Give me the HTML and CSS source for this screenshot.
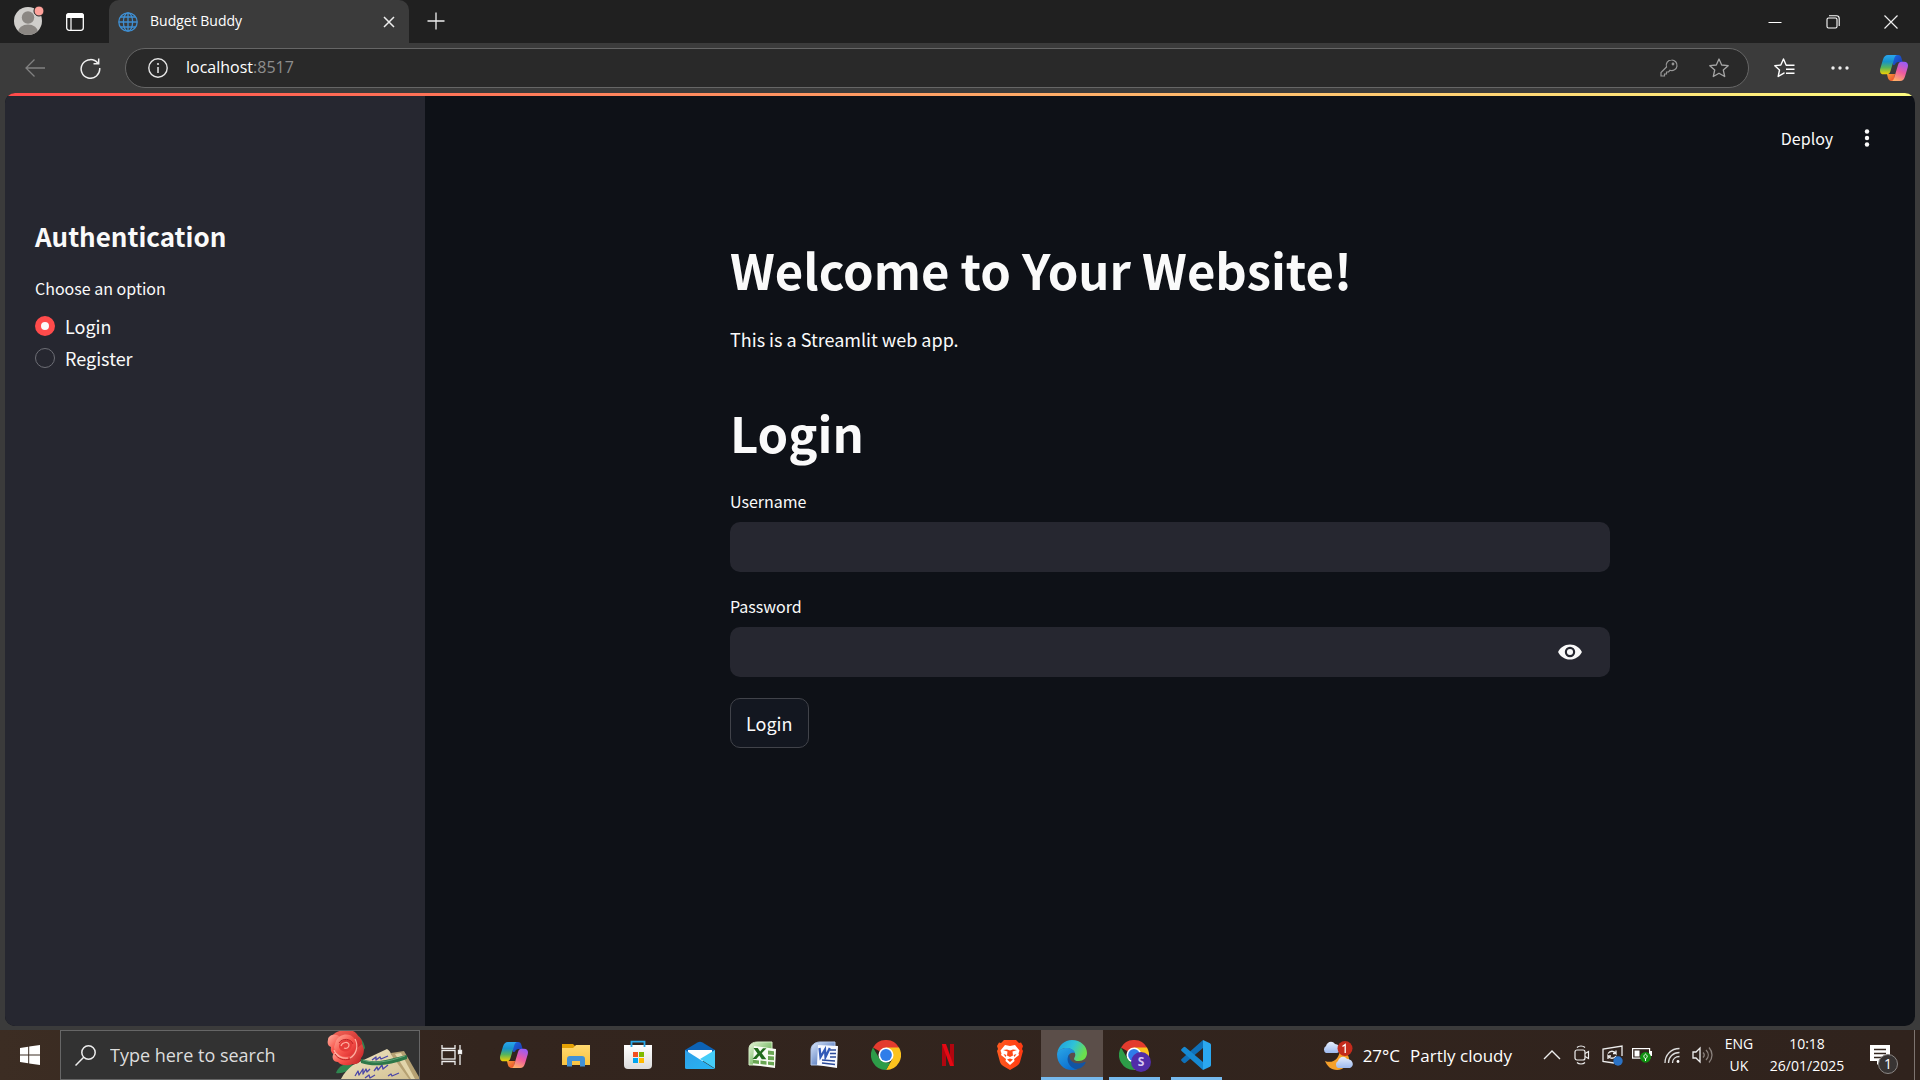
FILE: index.html
```html
<!DOCTYPE html>
<html lang="en">
<head>
<meta charset="utf-8">
<meta name="viewport" content="width=device-width, initial-scale=1">
<title>Budget Buddy</title>
<link rel="stylesheet" href="styles.css">
</head>
<body>
<svg class="defs" width="0" height="0" aria-hidden="true">
  <defs>
    <linearGradient id="cpA" x1="0" y1="0" x2="0" y2="1"><stop offset="0" stop-color="#2aa5ee"/><stop offset=".35" stop-color="#1793c9"/><stop offset=".65" stop-color="#57b55c"/><stop offset="1" stop-color="#f5d000"/></linearGradient>
    <linearGradient id="cpB" x1=".7" y1="0" x2=".3" y2="1"><stop offset="0" stop-color="#9a5cf5"/><stop offset=".5" stop-color="#ee5aa0"/><stop offset="1" stop-color="#ffb067"/></linearGradient>
    <linearGradient id="cpC" x1="0" y1="0" x2="1" y2="1"><stop offset="0" stop-color="#1b68e0"/><stop offset="1" stop-color="#1d37b0"/></linearGradient>
    <linearGradient id="cpD" x1="0" y1="0" x2="1" y2="1"><stop offset="0" stop-color="#f9a03a"/><stop offset="1" stop-color="#e8452c"/></linearGradient>
    <linearGradient id="edA" x1="0" y1="0" x2="1" y2=".4"><stop offset="0" stop-color="#1d9be0"/><stop offset=".55" stop-color="#2fc2d8"/><stop offset="1" stop-color="#6be04d"/></linearGradient>
    <linearGradient id="edB" x1="0" y1="0" x2=".6" y2="1"><stop offset="0" stop-color="#2aa6e6"/><stop offset="1" stop-color="#0b6fd0"/></linearGradient>
    <linearGradient id="fold" x1="0" y1="0" x2="0" y2="1"><stop offset="0" stop-color="#ffd970"/><stop offset="1" stop-color="#f8c341"/></linearGradient>
    <linearGradient id="mailL" x1="0" y1="0" x2="1" y2="1"><stop offset="0" stop-color="#2f9fe8"/><stop offset="1" stop-color="#27b5f3"/></linearGradient>
    <linearGradient id="storeBag" x1="0" y1="0" x2="0" y2="1"><stop offset="0" stop-color="#fff"/><stop offset="1" stop-color="#dcdcdc"/></linearGradient>
    <linearGradient id="xlBack" x1="0" y1="0" x2="1" y2="1"><stop offset="0" stop-color="#e6f6d8"/><stop offset="1" stop-color="#3f9a2c"/></linearGradient>
    <linearGradient id="wdBack" x1="0" y1="0" x2="1" y2="1"><stop offset="0" stop-color="#dbe7fa"/><stop offset="1" stop-color="#2250a8"/></linearGradient>
    <linearGradient id="cloud" x1="0" y1="0" x2="0" y2="1"><stop offset="0" stop-color="#e6eefc"/><stop offset="1" stop-color="#9db9ee"/></linearGradient>
    <linearGradient id="paper" x1="0" y1="0" x2="1" y2="1"><stop offset="0" stop-color="#efe5c2"/><stop offset="1" stop-color="#d3c294"/></linearGradient>
    <linearGradient id="petal" x1="0" y1="0" x2="1" y2="1"><stop offset="0" stop-color="#ffb3a2"/><stop offset=".5" stop-color="#f9594f"/><stop offset="1" stop-color="#d8262a"/></linearGradient>
    <linearGradient id="petalDark" x1="0" y1="0" x2="1" y2="1"><stop offset="0" stop-color="#f4685a"/><stop offset="1" stop-color="#c01a1f"/></linearGradient>
    <linearGradient id="brave" x1="0" y1="0" x2="1" y2="0"><stop offset="0" stop-color="#ff5a1f"/><stop offset="1" stop-color="#ff3a12"/></linearGradient>
    <symbol id="copilot" viewBox="0 0 28 26">
      <path d="M12.500 0h5.500c2 0 3 1.200 3.600 3.400L22.600 7h-4c-2 0-3 .8-3.600 2.800L13 10z" fill="url(#cpC)"/>
      <path d="M7 19h8l-1 7h-2.500C9.500 26 8.400 24.500 7.800 22.500z" fill="url(#cpD)"/>
      <path d="M8 0h9.500c-1.800 0-2.600 1.300-3.200 3.300L10.500 16c-.7 2.300-1.700 3.300-3.800 3.300H4c-3.500 0-4.600-2.300-3.700-5.800L3 4.500C4 1.500 5.300 0 8 0z" fill="url(#cpA)"/>
      <path d="M20 26h-9c1.800 0 2.600-1.300 3.200-3.300L18 10c.7-2.300 1.700-3.300 3.800-3.300H24c3.500 0 4.600 2.300 3.700 5.800L25 21.500C24 24.500 22.700 26 20 26z" fill="url(#cpB)"/>
    </symbol>
    <symbol id="chrome" viewBox="0 0 30 30">
      <path d="M15 15 2 7.500A15 15 0 0 1 28 7.500z" fill="#e33b2e"/>
      <path d="M15 15V7.500h13A15 15 0 0 1 15 30l6.500-11.300z" fill="#fcc31e"/>
      <path d="M2 7.500 8.500 18.800 15 22.500h4.300L15 30A15 15 0 0 1 2 7.500z" fill="#2d9c48"/>
      <circle cx="15" cy="15" r="7.500" fill="#fff"/><circle cx="15" cy="15" r="5.900" fill="#2f7de9"/>
    </symbol>
  </defs>
</svg>

<header class="tabstrip">
  <button class="avatar" aria-label="Profile">
    <svg width="32" height="32" viewBox="0 0 32 32"><defs><clipPath id="av"><circle cx="14" cy="17" r="14"/></clipPath></defs><circle cx="14" cy="17" r="14" fill="#d0cecb"/><g clip-path="url(#av)" fill="#8b8783"><circle cx="14" cy="13.500" r="6.200"/><ellipse cx="14" cy="28" rx="10" ry="7.500"/></g><circle cx="25" cy="7" r="5" fill="#ffa29b" stroke="#202020"/></svg>
  </button>
  <button class="workspaces" aria-label="Tab actions menu">
    <svg width="18" height="18" viewBox="0 0 18 18"><rect x=".7" y=".7" width="16.600" height="16.600" rx="2.500" fill="none" stroke="#fff" stroke-width="1.300"/><path d="M0 5V3a3 3 0 0 1 3-3h12a3 3 0 0 1 3 3v2z" fill="#fff"/><path d="M5 5v12" stroke="#fff" stroke-width="1.200"/></svg>
  </button>
  <div class="tab">
    <svg width="20" height="20" viewBox="0 0 20 20" fill="none" stroke="#3f8fd2" stroke-width="1.300"><circle cx="10" cy="10" r="9.200"/><ellipse cx="10" cy="10" rx="4.600" ry="9.200"/><path d="M10 1v18M1 10h18M2.500 5h15M2.500 15h15"/></svg>
    <span class="tab-title">Budget Buddy</span>
    <button class="tab-close" aria-label="Close tab"><svg width="12" height="12" viewBox="0 0 12 12"><path d="m1 1 10 10M11 1 1 11" stroke="#eee" stroke-width="1.500"/></svg></button>
  </div>
  <button class="new-tab" aria-label="New tab"><svg width="18" height="18" viewBox="0 0 18 18"><path d="M9 .5v17M.5 9h17" stroke="#eee" stroke-width="1.300"/></svg></button>
  <div class="window-controls">
    <button aria-label="Minimise"><svg width="14" height="14" viewBox="0 0 14 14"><path d="M.5 7.500h13" stroke="#fff"/></svg></button>
    <button aria-label="Restore"><svg width="14" height="14" viewBox="0 0 14 14" fill="none" stroke="#fff" stroke-width="1.100"><rect x="1" y="3" width="10" height="10" rx="1.500"/><path d="M3 .8h7.500a2.700 2.700 0 0 1 2.700 2.700V11"/></svg></button>
    <button aria-label="Close"><svg width="14" height="14" viewBox="0 0 14 14"><path d="m.5.500 13 13m0-13-13 13" stroke="#eee" stroke-width="1.200"/></svg></button>
  </div>
</header>

<nav class="toolbar">
  <button class="tool back" aria-label="Back"><svg width="20" height="18" viewBox="0 0 20 18" fill="none" stroke="#818181" stroke-width="1.300"><path d="M20 9H1M9.500.500 1 9l8.500 8.500"/></svg></button>
  <button class="tool reload" aria-label="Refresh"><svg width="21" height="21" viewBox="0 0 21 21" fill="none" stroke="#f0f0f0" stroke-width="1.500"><path d="M18 5.500a9.300 9.300 0 1 0 1.700 4.500M18.700.5v5.300h-5.200"/></svg></button>
  <div class="address">
    <button class="tool info" aria-label="Site information"><svg width="20" height="20" viewBox="0 0 20 20"><circle cx="10" cy="10" r="9.200" fill="none" stroke="#e6e6e6" stroke-width="1.400"/><path d="M10 9v6" stroke="#ddd" stroke-width="1.600"/><circle cx="10" cy="6" r="1.100" fill="#ddd"/></svg></button>
    <a class="url" href="#">localhost<span>:8517</span></a>
    <button class="tool key" aria-label="Passwords"><svg width="18" height="18" viewBox="0 0 18 18" fill="none" stroke="#989898" stroke-width="1.200"><path d="M11.500 1a5.300 5.300 0 0 0-5 7L1 13.500V17h3.500v-2h2v-2h2l1.500-1.700A5.300 5.300 0 1 0 11.500 1z"/><circle cx="13" cy="5" r=".8" fill="#989898"/></svg></button>
    <button class="tool star" aria-label="Add to favourites"><svg width="20" height="20" viewBox="0 0 20 20"><path d="m10 1 2.700 6 6.500.7-4.900 4.300 1.400 6.500L10 15.200l-5.700 3.300L5.700 12 .8 7.700l6.500-.7z" fill="none" stroke="#a5a5a5" stroke-width="1.300" stroke-linejoin="round"/></svg></button>
  </div>
  <div class="tools-right">
    <button class="tool" aria-label="Favourites"><svg width="21" height="20" viewBox="0 0 21 20" fill="none" stroke="#fff" stroke-width="1.400" stroke-linejoin="round"><path d="M13 7.200h-.8L9.500 1 6.800 7 .8 7.700l4.700 4.300-1.300 6.500 5.300-3.200 1-.6M13 7.200h7.500M12 11.200h8.500M12 15.200h8.500"/></svg></button>
    <button class="tool" aria-label="Settings and more"><svg width="18" height="4" viewBox="0 0 18 4" fill="#eee"><circle cx="2" cy="2" r="1.700"/><circle cx="9" cy="2" r="1.700"/><circle cx="16" cy="2" r="1.700"/></svg></button>
    <button class="tool" aria-label="Copilot"><svg width="28" height="26"><use href="#copilot"/></svg></button>
  </div>
</nav>

<div class="page">
  <div class="decoration"></div>
  <aside class="sidebar">
    <h2>Authentication</h2>
    <fieldset>
      <legend>Choose an option</legend>
      <label><input type="radio" name="option" checked>Login</label>
      <label><input type="radio" name="option">Register</label>
    </fieldset>
  </aside>
  <main class="main">
    <div class="app-header">
      <button class="deploy">Deploy</button>
      <button class="menu" aria-label="Main menu"><svg width="6" height="18" viewBox="0 0 6 18" fill="#fafafa"><circle cx="3" cy="2.500" r="2.200"/><circle cx="3" cy="9" r="2.200"/><circle cx="3" cy="15.500" r="2.200"/></svg></button>
    </div>
    <div class="block">
      <h1>Welcome to Your Website!</h1>
      <p>This is a Streamlit web app.</p>
      <h1>Login</h1>
      <form>
        <label for="username">Username</label>
        <div class="field"><input id="username" type="text"></div>
        <label for="password">Password</label>
        <div class="field"><input id="password" type="password"><button type="button" aria-label="Show password"><svg width="26" height="26" viewBox="0 0 24 24" fill="#fafafa"><path d="M12 5C7 5 2.730 8.110 1 12c1.730 3.890 6 7 11 7s9.270-3.110 11-7c-1.730-3.890-6-7-11-7zm0 11.800a4.800 4.800 0 1 1 0-9.600 4.800 4.800 0 0 1 0 9.600zm0-7.600a2.800 2.800 0 1 0 0 5.600 2.800 2.800 0 0 0 0-5.600z"/></svg></button></div>
        <button class="submit" type="button">Login</button>
      </form>
    </div>
  </main>
</div>

<footer class="taskbar">
  <button class="start" aria-label="Start"><svg width="20" height="20" viewBox="0 0 20 20" fill="#fff"><path d="M0 3l8.200-1.200v7.700H0zM9.200 1.600 20 0v9.500H9.200zM0 10.500h8.200v7.700L0 17zM9.200 10.500H20V20L9.200 18.400z"/></svg></button>
  <div class="search">
    <svg width="21" height="21" viewBox="0 0 21 21" fill="none" stroke="#eee" stroke-width="1.500"><circle cx="13.500" cy="7.500" r="6.700"/><path d="m8.700 12.300-8.200 8.200"/></svg>
    <input type="text" placeholder="Type here to search" aria-label="Type here to search">
    <svg class="rose" width="92" height="48" viewBox="0 0 92 48">
      <path d="M27 2c5 2 10 8 11 15l-5 8-8-6z" fill="#2f8650"/>
      <path d="M29 6c2 5 4 9 5 15" fill="none" stroke="#5fae78"/>
      <path d="M24 33c-7-1-13 3-15 9 6 1 13-2 18-7z" fill="#2f8650"/>
      <path d="m64 22 13-2 15 26v2H70z" fill="#b5a173"/>
      <path d="m68 23 6-1 14 26h-4z" fill="#e2d5ab"/>
      <path d="M14 48c3-6 7-10 12-14l34-16c4 2 4 7 8 11l14 19z" fill="url(#paper)"/>
      <path d="M28 45l3-5 1 4 4-6 0 5 3-5 1 3 3-3M45 29l4-3 0 3 4-3 1 2 7-3M47 40l3-4 1 3 4-5 1 4 5-4M38 47l4-3 1 3 5-3M61 45l3-2 1 2 7-3" fill="none" stroke="#4a46a8" stroke-width="1.300" stroke-linejoin="round"/>
      <path d="M34 28c12 4 22 2 33-1l13-3v4c-15 5-31 9-46 4z" fill="#2d7748"/>
      <path d="M36 29c12 4 24 2 42-4" fill="none" stroke="#65a67a"/>
      <path d="M17 0c6-2 12 0 14 5 5 3 5 9 3 13l-12 6L8 18 5 5C8 1 13-1 17 0z" fill="url(#petalDark)"/>
      <path d="M1 9c0-4 4-6 9-5l9 5-7 15c-6 1-9-3-8-8-3-1-4-4-3-7z" fill="url(#petal)"/>
      <path d="M7 22c-3 4-1 9 4 9 3 4 10 4 15 2l2-9-9-4z" fill="url(#petal)"/>
      <path d="M35 13c3 5 2 11-1 14 0 4-4 7-9 6-3-2-4-7-1-11z" fill="url(#petalDark)"/>
      <path d="M9 10c3-7 13-9 18-3 5 5 2 15-4 18-8 3-16-3-16-9z" fill="url(#petal)"/>
      <path d="M13 12c3-5 12-4 12 1 0 6-5 9-9 7-4-1-5-5-3-8z" fill="#e63c39"/>
      <path d="M14 15c1-4 8-5 8-1 0 3-3 4-5 3M28 8c4 7 1 16-5 19M7 19c2 6 8 9 14 8" fill="none" stroke="#ffaea0" stroke-width="1.200"/>
      <path d="M12 12c3-5 12-5 14 1M8 23c3 5 9 7 15 5" fill="none" stroke="#bd2325"/>
    </svg>
  </div>
  <button class="app task-view" aria-label="Task View"><svg width="22" height="20" viewBox="0 0 22 20" fill="none" stroke="#eee" stroke-width="1.300"><path d="M1 0v3.500h13V0M1 20v-3.500h13V20M19 0v5M19 10v10"/><rect x="1" y="5.500" width="13" height="8.500"/><path d="M17.500 5.500h3v3h-3z" fill="#fff"/></svg></button>
  <button class="app" aria-label="Copilot"><svg width="28" height="26"><use href="#copilot"/></svg></button>
  <button class="app" aria-label="File Explorer"><svg width="28" height="24" viewBox="0 0 28 24"><path d="M0 1h11l3 3v3H0z" fill="#e4a104"/><path d="M0 5h11l3-3h14v20H0z" fill="url(#fold)"/><path d="M5 23.500V16a3 3 0 0 1 3-3h12a3 3 0 0 1 3 3v7.500h-5V18h-8v5.500z" fill="#4191d6"/></svg></button>
  <button class="app" aria-label="Microsoft Store"><svg width="30" height="30" viewBox="0 0 30 30"><path d="M8.500 7V1.700h13V7" fill="none" stroke="#28a8ea" stroke-width="1.800"/><path d="M1 5h28v20a4 4 0 0 1-4 4H5a4 4 0 0 1-4-4z" fill="url(#storeBag)"/><path d="M8.500 5v2M21.500 5v2" stroke="#28a8ea" stroke-width="1.800"/><path d="M10 12h5v5h-5z" fill="#f25022"/><path d="M16 12h5v5h-5z" fill="#7fba00"/><path d="M10 18h5v5h-5z" fill="#00a4ef"/><path d="M16 18h5v5h-5z" fill="#ffb900"/></svg></button>
  <button class="app" aria-label="Mail"><svg width="30" height="30" viewBox="0 0 30 30"><path d="M0 10 12.500 2.500q2.500-1.500 5 0L30 10v6H0z" fill="#0c62b5"/><path d="M3 10h24v6L15 23 3 16z" fill="#fff"/><path d="M0 10v17.500a1.500 1.500 0 0 0 1.500 1.500H30z" fill="url(#mailL)"/><path d="M30 10v18.500L15 19z" fill="#45cdf8"/></svg></button>
  <button class="app" aria-label="Excel"><svg width="29" height="28" viewBox="0 0 29 28"><path d="M1 24V8C1 3 5 1 10 1h14v23z" fill="url(#xlBack)" stroke="#d4ecc5"/><path d="m6 5 22 3-1 19-22-3z" fill="#f7fbf3"/><path d="M20 9.500l6 .7v3.700l-6-.5zM20 15l6 .5v3.800l-6-.4zM20 20.500l6 .5v3.500l-6-.7zM12.500 19.500l6 .7v3.500l-6-.7zM5 18.700l6 .7v3.500l-6-.7z" fill="#68a552"/><path d="M5.500 7h4.200l2.400 3.500L15 7.200h3.500l-4.700 5 4.500 6h-4.500l-2.500-3.700-3 3.500H4.500l5-5.500z" fill="#216b1d"/></svg></button>
  <button class="app" aria-label="Word"><svg width="29" height="28" viewBox="0 0 29 28"><path d="M1 24V9C1 4 5 1 10 1h15v23z" fill="url(#wdBack)" stroke="#aec3e8"/><path d="m8 4 20 1-1 22-20-3z" fill="#f7f9ff"/><path d="M20 9h6M20 12.500h6M20 16h6M12 19l13 1M12 22l13 1.500" stroke="#2c4b9a" stroke-width="1.600"/><path d="m9.500 7 1 9L15 8.500l.500 7.500 4.300-9" fill="none" stroke="#3159b7" stroke-width="2.300"/></svg></button>
  <button class="app" aria-label="Chrome"><svg width="30" height="30"><use href="#chrome"/></svg></button>
  <button class="app" aria-label="Netflix"><svg width="12" height="22" viewBox="0 0 12 22"><path d="M0 0h4v22l-4 .5zM8 0h4v22.500L8 22z" fill="#b1060f"/><path d="M0 0h4l8 22.500L8 22z" fill="#e50914"/></svg></button>
  <button class="app" aria-label="Brave"><svg width="26" height="30" viewBox="0 0 26 30"><path d="M7 0h12l3 3 2-.5 2 3.500-1 3 1 2-3 11c-.5 2-2 3-4 4.500L13 30l-6-3.500C5 25 3.500 24 3 22L0 11l1-2-1-3 2-3.500L4 3z" fill="url(#brave)"/><path d="m8 5 5 1 5-1 4.500 5.500-1 3 .5 1.500-5 4 .5 2L13 25l-4.500-4 .5-2-5-4 .5-1.500-1-3z" fill="#fff"/><path d="m6 10 4.500 1.500-.5 4L13 17l3-1.500-.5-4L20 10l-4-.500-3 1-3-1zM6.500 14l3 1-1 2zM19.500 14l-3 1 1 2zM10 19.500l3-1 3 1-3 2.500z" fill="#ff4a18"/></svg></button>
  <button class="app active" aria-label="Edge"><svg width="30" height="30" viewBox="0 0 30 30"><path d="M.2 13.500C1.200 5.500 7.500 0 15 0c8.500 0 15 6 15 13 0 5-3.800 8-8.200 8-3.500 0-5.100-1.300-4.700-2.600.5-1.200 1.200-1.800 1.200-3.600C18.300 11 14 8 9.500 8 5 8 1.500 10.500.2 13.500z" fill="url(#edA)"/><path d="M.1 13.500C1.500 10.300 5 8 9.500 8c4.400 0 7.700 2 8.600 5-5-1.400-7.400 2-7.100 6 .4 5.500 4.500 9.500 9.500 10-1.500.7-3.500 1-5.500 1C6 30-.5 22.500.1 13.500z" fill="url(#edB)"/><path d="M12.600 14.200C9 17.500 10 25 17 28.500c2 .8 3.500.6 5 .1 3-1.200 5.300-3.400 6.500-5.700.3-.7-.3-1.100-.9-.8C22 25 11 23.500 12.600 14.200z" fill="#1254a3"/></svg></button>
  <button class="app running" aria-label="Chrome, profile S"><svg width="30" height="30"><use href="#chrome"/></svg><span class="profile">S</span></button>
  <button class="app running" aria-label="Visual Studio Code"><svg width="30" height="30" viewBox="0 0 30 30"><path d="M22 8 4.500 22.700a1.500 1.500 0 0 1-2 0L.6 21a1.400 1.400 0 0 1 0-2L22 0z" fill="#0f70b8"/><path d="M22 22 4.500 7.300a1.500 1.500 0 0 0-2 0L.6 9a1.400 1.400 0 0 0 0 2L22 30z" fill="#1689d2"/><path d="m22 0 7 3.300c.6.300 1 .9 1 1.600v20.200c0 .7-.4 1.300-1 1.600L22 30z" fill="#2ba8f0"/></svg></button>

  <div class="tray">
    <button class="weather"><svg width="31" height="29" viewBox="0 0 31 29"><path d="M18 9c4 1 9 4 9 9s-5 11-12 11c-6 0-10-4-12-9 8 3 14-2 15-11z" fill="#f5a02b"/><path d="M4 12a4 4 0 0 1 0-7C5 1 10-1 13 3c5 0 7 8 2 9z" fill="url(#cloud)"/><path d="M16 27a4 4 0 0 1 0-7c1-4 6-6 9-2 6 0 8 7 3 9z" fill="url(#cloud)"/><circle cx="23" cy="7.500" r="7.500" fill="#c42b1c"/><path d="m20.500 5.500 2.700-2V12" fill="none" stroke="#fff" stroke-width="1.300"/></svg><span>27°C</span><span>Partly cloudy</span></button>
    <button class="tray-icon" aria-label="Show hidden icons"><svg width="18" height="10" viewBox="0 0 18 10"><path d="m1 9 8-8 8 8" fill="none" stroke="#eee" stroke-width="1.400"/></svg></button>
    <button class="tray-icon" aria-label="Meet Now"><svg width="16" height="20" viewBox="0 0 16 20" fill="none" stroke="#eee" stroke-width="1.200"><rect x="1" y="5" width="10" height="10" rx="2"/><path d="m11 8.500 3.500-2v7L11 11.500M3 2.500c2-2 6-2 8 0M3 17.500c2 2 6 2 8 0"/></svg></button>
    <button class="tray-icon" aria-label="Update"><svg width="21" height="21" viewBox="0 0 21 21" fill="none" stroke="#eee" stroke-width="1.300"><path d="M12 18 1 16.500V4l19-3v10M6 8.500c2-3 6-3 8 0V5.500M14 8.500h-3M14 11c-2 3-6 3-8 0v3M6 11h3"/><circle cx="16" cy="16" r="4.700" fill="#2b72c4" stroke="none"/></svg></button>
    <button class="tray-icon" aria-label="Battery"><svg width="20" height="16" viewBox="0 0 20 16"><rect x=".6" y="1.600" width="17" height="9.500" fill="none" stroke="#fff" stroke-width="1.200"/><path d="M2.500 3.500h5v6h-5zM18 4h2v5h-2z" fill="#fff"/><circle cx="13.500" cy="10.300" r="5.400" fill="#109010"/><path d="M13.500 14v-2.500c-2.500-1-2-3 0-4.500 2 1.500 2.500 3.500 0 4.500" fill="none" stroke="#fff"/></svg></button>
    <button class="tray-icon" aria-label="Network"><svg width="16" height="16" viewBox="0 0 16 16" fill="none" stroke="#ddd" stroke-width="1.300"><path d="M1 16C1 8 7 1.500 15.500 1.500M4.500 16c0-6 4.500-10.500 11-10.500M8.500 16c0-4 3-6.500 7-6.500"/><circle cx="14" cy="14.500" r="1.400" fill="#fff" stroke="none"/></svg></button>
    <button class="tray-icon" aria-label="Volume"><svg width="21" height="18" viewBox="0 0 21 18" fill="none" stroke-width="1.300"><path d="M1 6h3l4-4v14l-4-4H1z" stroke="#eee"/><path d="M11 6.500c1.500 1.500 1.500 3.500 0 5M14 4c3 3 3 7 0 10M17 1.500c4 4.500 4 10.500 0 15" stroke="#8a817c"/></svg></button>
    <button class="lang"><span>ENG</span><span>UK</span></button>
    <button class="clock"><span>10:18</span><span>26/01/2025</span></button>
    <button class="notify" aria-label="Notifications"><svg width="20" height="20" viewBox="0 0 20 20"><path d="M0 0h20v16h-9l-4 4v-4H0z" fill="#fff"/><path d="M4 4.500h12M4 8.500h12M4 12.500h8" stroke="#33261f" stroke-width="1.300"/></svg><span class="badge">1</span></button>
    <div class="show-desktop"></div>
  </div>
</footer>
</body>
</html>
```
FILE: styles.css
```css
* { box-sizing: border-box; }

body {
  margin: 0;
  min-height: 100vh;
  display: grid;
  grid-template-rows: 43px 50px 1fr 50px;
  background: #3b3b3b;
  color: #fff;
  font-family: "Open Sans", "Noto Sans", sans-serif;
}

.defs { position: absolute; }

button {
  display: flex;
  align-items: center;
  justify-content: center;
  padding: 0;
  border: 0;
  background: none;
  color: inherit;
  font: inherit;
}

svg { flex: none; display: block; }

/* Tab strip */
.tabstrip { display: flex; align-items: stretch; background: #202020; }
.avatar { width: 46px; padding-left: 14px; padding-bottom: 3px; }
.workspaces { width: 58px; margin-right: 5px; }
.tab {
  width: 300px;
  display: flex;
  align-items: center;
  gap: 12px;
  padding: 0 14px 0 9px;
  border-radius: 10px 10px 0 0;
  background: #3b3b3b;
}
.tab-title { flex: 1; font-size: 14px; line-height: 20px; padding-bottom: 2px; }
.new-tab { width: 54px; padding-bottom: 2px; }
.window-controls { display: flex; margin-left: auto; }
.window-controls button { width: 58px; }

/* Toolbar */
.toolbar { display: flex; align-items: center; padding: 0 5px; }
.tool { width: 55px; height: 40px; }
.back { width: 60px; }
.reload { width: 50px; margin-right: 10px; }
.address {
  flex: 1;
  display: flex;
  align-items: center;
  height: 40px;
  padding-left: 7px;
  border: 1px solid #666;
  border-radius: 20px;
  background: #292929;
}
.address .info { width: 50px; }
.address .key, .address .star { width: 50px; }
.address .star { margin-right: 4px; }
.url { flex: 1; margin-left: 3px; padding-bottom: 2px; color: #fff; font-size: 16px; text-decoration: none; }
.url span { color: #8d8d8d; }
.tools-right { display: flex; margin-left: 8px; margin-right: -5px; }
.tools-right .tool:last-child { width: 53px; }

/* Streamlit page */
.page {
  display: grid;
  grid-template-columns: 420px 1fr;
  grid-template-rows: 3px 1fr;
  margin: 0 5px 4px;
  border-radius: 10px;
  overflow: hidden;
  background: #0e1117;
  color: #fafafa;
  font-family: "Noto Sans CJK SC", "Noto Sans", sans-serif;
  font-size: 18px;
  line-height: 32px;
}
.decoration { grid-column: 1 / 3; background: linear-gradient(90deg, #ff4b4b, #fffd80); }
.sidebar { padding: 122px 30px 30px; background: #262730; }
.sidebar h2 { margin: 0 0 21px; font-size: 26px; line-height: 36px; font-weight: 700; }
fieldset { margin: 0; padding: 0; border: 0; }
legend, form label { display: block; padding: 0; font-size: 16px; line-height: 26px; }
legend { margin-bottom: 9px; }
fieldset label { display: flex; align-items: center; gap: 10px; }
input[type="radio"] {
  appearance: none;
  width: 20px;
  height: 20px;
  margin: 0;
  border: 1px solid #6d6e75;
  border-radius: 50%;
}
input[type="radio"]:checked { border: 6px solid #ff4b4b; background: #fafafa; }

.app-header { display: flex; justify-content: flex-end; align-items: center; height: 84px; padding-right: 27px; }
.deploy { width: 78px; font-size: 16px; }
.menu { width: 42px; height: 40px; }
.block { width: 100%; max-width: 880px; margin: 0 auto; padding: 56px 0 40px; }
h1 { margin: 0; font-size: 49px; line-height: 66px; font-weight: 700; }
.block p { margin: 21px 0 44px; }
form { margin-top: 23px; }
.field { display: flex; align-items: center; height: 50px; margin: 8px 0 21px; border-radius: 10px; background: #262730; }
.field input { flex: 1; height: 100%; padding: 0 16px; border: 0; outline: 0; background: none; color: inherit; font: inherit; }
.field button { width: 80px; height: 50px; }
.submit { height: 50px; padding: 0 15px; border: 1px solid #41434a; border-radius: 10px; background: #131720; }

/* Taskbar */
.taskbar { display: flex; background: linear-gradient(90deg, #3c2d23, #33251e 25%, #30231d); }
.start { width: 60px; }
.search {
  width: 360px;
  display: flex;
  align-items: center;
  gap: 14px;
  padding-left: 14px;
  border: 1px solid #666;
  background: #323232;
}
.search input { flex: 1; min-width: 0; padding: 0; border: 0; outline: 0; background: none; font: 18px/24px "Open Sans", sans-serif; color: #fff; }
.search input::placeholder { color: #ddd; opacity: 1; }
.app { position: relative; width: 62px; }
.task-view { width: 63px; }
.active { background: #5b4e49; box-shadow: inset 0 -3px #76b9ed; }
.running::after { content: ""; position: absolute; left: 6px; right: 5px; bottom: 0; height: 3px; background: #76b9ed; }
.profile {
  position: absolute;
  left: 28px;
  top: 22px;
  width: 20px;
  height: 20px;
  border-radius: 50%;
  background: #512da8;
  color: #d5c8f2;
  font: 700 12px/20px "Open Sans", sans-serif;
}
.tray { display: flex; margin-left: auto; }
.weather { gap: 10px; margin-right: 25px; font-size: 17px; }
.tray-icon { width: 30px; }
.lang, .clock { flex-direction: column; font-size: 14px; line-height: 22px; }
.lang { width: 44px; }
.clock { width: 92px; }
.notify { position: relative; width: 61px; padding-right: 8px; }
.badge {
  position: absolute;
  left: 25px;
  top: 24px;
  width: 20px;
  height: 20px;
  border: 1px solid #8b8785;
  border-radius: 50%;
  background: #383433;
  font-size: 14px;
  line-height: 18px;
}
.show-desktop { width: 6px; border-left: 1px solid #7d7470; }
```
